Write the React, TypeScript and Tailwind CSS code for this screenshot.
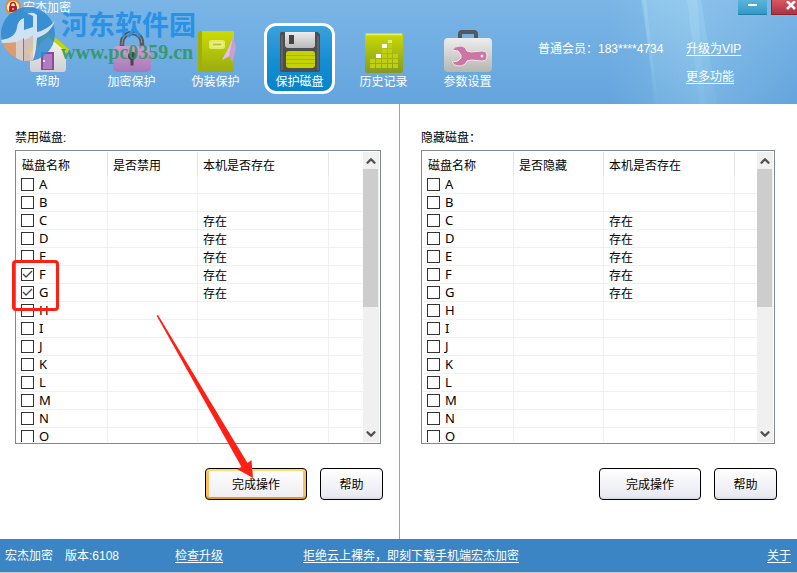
import React, { useRef, useState } from 'react';
import { ChevronDown, ChevronUp } from 'lucide-react';

const DRIVES = 'ABCDEFGHIJKLMNOPQRSTUVWXYZ'.split('');
const PRESENT = ['C', 'D', 'E', 'F', 'G'];

function HelpIcon() {
  return (
    <svg width="48" height="44" viewBox="0 0 48 44">
      <defs>
        <linearGradient id="wall" x1="0" y1="0" x2="0" y2="1">
          <stop offset="0" stopColor="#f8f8f8" />
          <stop offset="1" stopColor="#cfcfd2" />
        </linearGradient>
      </defs>
      <path d="M6 20 24 6l18 14v19q0 3-3 3H9q-3 0-3-3z" fill="url(#wall)" />
      <path d="M4 22 24 4l20 17" fill="none" stroke="#c3d600" strokeWidth="4" strokeLinejoin="round" strokeLinecap="round" />
      <path d="M17 22h13v18H17z" fill="#8c4a9e" />
      <path d="M19 24h9v15h-9z" fill="#b27cc0" />
      <circle cx="20" cy="31" r="1" fill="#fff" />
    </svg>
  );
}

function LockIcon() {
  return (
    <svg width="48" height="44" viewBox="0 0 48 44">
      <defs>
        <linearGradient id="lock" x1="0" y1="0" x2="0" y2="1">
          <stop offset="0" stopColor="#cb9fd2" />
          <stop offset="1" stopColor="#a878b8" />
        </linearGradient>
      </defs>
      <path d="M14 17v-4a10 10 0 0 1 20 0v4" fill="none" stroke="#55585e" strokeWidth="4.5" />
      <path d="M14 15v-2a10 10 0 0 1 20 0" fill="none" stroke="#94999f" strokeWidth="1" />
      <rect x="5" y="16" width="38" height="26" rx="5" fill="url(#lock)" />
      <circle cx="24" cy="26" r="4" fill="#4a4450" />
      <path d="M22.500 27h3v8.500h-3z" fill="#4a4450" />
    </svg>
  );
}

function DisguiseIcon() {
  return (
    <svg width="48" height="44" viewBox="0 0 48 44">
      <defs>
        <linearGradient id="book" x1="0" y1="0" x2="0" y2="1">
          <stop offset="0" stopColor="#cddb00" />
          <stop offset="1" stopColor="#9aac12" />
        </linearGradient>
      </defs>
      <rect x="6" y="1" width="36" height="41" rx="2" fill="url(#book)" />
      <path d="M6 3q0-2 2-2h2v41H8q-2 0-2-2z" fill="#9fb008" />
      <rect x="17" y="10" width="16" height="9" rx="2.500" fill="#e3ea6a" />
      <rect x="20" y="13" width="10" height="3" fill="#b5c52b" stroke="#f1f4a8" strokeWidth="1" />
      <path d="m41 7 3 9-1 7-3 9-2-5-8 3 7-13z" fill="#c7a0d0" />
      <path d="m41 7-4 19-7 4 7-13z" fill="#dcc3e2" />
    </svg>
  );
}

function DiskIcon() {
  return (
    <svg width="48" height="44" viewBox="0 0 48 44">
      <defs>
        <linearGradient id="metal" x1="0" y1="0" x2="0" y2="1">
          <stop offset="0" stopColor="#ececec" />
          <stop offset="1" stopColor="#b9b9b9" />
        </linearGradient>
      </defs>
      <path d="M4 3.500Q4 2 5.500 2h36L44 4.500V40q0 2-2 2H6q-2 0-2-2z" fill="#4e4d50" />
      <path d="M6 5v35M42 6v34" stroke="#78777a" strokeWidth="1" />
      <path d="M9 2h30v13q0 3-3 3H12q-3 0-3-3z" fill="url(#metal)" />
      <rect x="13" y="5" width="5" height="9" fill="#454446" />
      <rect x="10" y="21" width="29" height="17" rx="3" fill="#c4d300" />
      <path d="M10 25.500h29M10 29.500h29M10 33.500h29" stroke="#a5b508" strokeWidth="1" />
    </svg>
  );
}

function HistoryIcon() {
  return (
    <svg width="48" height="44" viewBox="0 0 48 44">
      <defs>
        <linearGradient id="hist" x1="0" y1="0" x2="0" y2="1">
          <stop offset="0" stopColor="#ccdb00" />
          <stop offset="1" stopColor="#849a22" />
        </linearGradient>
      </defs>
      <rect x="5" y="3" width="38" height="40" rx="2" fill="url(#hist)" />
      <path d="M6 4.500h36" stroke="#e8f060" strokeWidth="1.500" />
      <g fill="#c0d010">
        <path d="M10 34h5v4h-5zM16 34h5v4h-5zM22 34h5v4h-5zM28 34h4v4h-4zM33 34h5v4h-5z" />
        <path d="M10 29h5v4h-5zM16 29h5v4h-5zM22 29h5v4h-5zM28 29h4v4h-4zM33 29h5v4h-5z" />
        <path d="M22 24h5v4h-5zM28 24h4v4h-4zM33 24h5v4h-5zM22 19h5v4h-5zM28 19h4v4h-4zM28 14h4v4h-4z" />
      </g>
      <path d="M28 10h4v3h-4z" fill="#e2ea85" />
      <path d="M16 24h5v4h-5zM22 14h5v4h-5z" fill="#fff" />
    </svg>
  );
}

function SettingsIcon() {
  return (
    <svg width="48" height="44" viewBox="0 0 48 44">
      <defs>
        <linearGradient id="box" x1="0" y1="0" x2="0" y2="1">
          <stop offset="0" stopColor="#ededed" />
          <stop offset="1" stopColor="#b5b6b0" />
        </linearGradient>
      </defs>
      <path d="M16 9V4q0-2 2-2h12q2 0 2 2v5" fill="none" stroke="#56585c" strokeWidth="4" />
      <rect x="0" y="8" width="48" height="34" rx="4" fill="url(#box)" />
      <path
        d="M8 20q3-4 8-4 5 0 7 5l4 1 11-1q5 0 5 5t-5 5l-11-1-4 1q-2 5-8 5-5 0-7-4l6-1 3-3v-3l-3-4z"
        fill="#cb76a5"
        stroke="#f1e4ec"
        strokeWidth="1"
      />
      <circle cx="38" cy="26" r="1.500" fill="#f3dfe9" />
    </svg>
  );
}

const NAV = [
  { label: '帮助', icon: HelpIcon },
  { label: '加密保护', icon: LockIcon },
  { label: '伪装保护', icon: DisguiseIcon },
  { label: '保护磁盘', icon: DiskIcon, active: true },
  { label: '历史记录', icon: HistoryIcon },
  { label: '参数设置', icon: SettingsIcon },
];

function Watermark() {
  return (
    <div className="pointer-events-none absolute left-0 top-1 flex items-start gap-1">
      <svg width="57" height="60" viewBox="0 0 57 60" opacity="0.85">
        <circle cx="28" cy="30" r="27" fill="#2f8ad0" />
        <path d="M2 37q9-2 15-6l-1 23Q5 49 2 37z" fill="#ef9a5c" />
        <path d="M16 54V31l7-3v29q-4-1-7-3z" fill="#e9d3c8" />
        <path d="M1 36q15-2 16-13 1-7 7-9v12l9-3V12q-3-2-6-2 6-3 10 1v17q10-2 18-11-5 13-18 17-1 15-4 22l-9 1V34l-7 4Q10 39 2 39z" fill="#e0ebf6" />
        <path d="M24 36q6-2 9-5v25q-4 2-9 1z" fill="#e3b9a4" opacity="0.8" />
      </svg>
      <div className="pt-1">
        <p className="font-['Noto_Sans_CJK_SC',sans-serif] text-[27px] font-bold leading-8 text-[#2992e4]">河东软件园</p>
        <p className="font-['Liberation_Serif',serif] text-xl font-bold leading-6 text-[#2f9663]/90">www.pc0359.cn</p>
      </div>
    </div>
  );
}

function Header() {
  return (
    <header className="relative overflow-hidden bg-linear-to-b from-[#7ab5e6] to-[#64a4dd] text-white">
      <svg className="absolute right-0 top-0" width="190" height="104" viewBox="0 0 190 104">
        <defs>
          <linearGradient id="ray" x1="0" y1="0" x2="0" y2="1">
            <stop offset="0" stopColor="#b5e4f5" stopOpacity="0.28" />
            <stop offset="1" stopColor="#b5e4f5" stopOpacity="0.06" />
          </linearGradient>
          <linearGradient id="glow" x1="0" y1="0" x2="1" y2="0">
            <stop offset="0" stopColor="#b5e4f5" stopOpacity="0" />
            <stop offset="0.5" stopColor="#b5e4f5" stopOpacity="0.25" />
            <stop offset="1" stopColor="#b5e4f5" stopOpacity="0" />
          </linearGradient>
        </defs>
        <path d="M0 0h190v104H0z" fill="url(#glow)" />
        <path d="M34 0h60l16 104H50z" fill="url(#ray)" />
        <path d="M36 0h3l12 104h-4zM80 0h10l8 104h-5z" fill="url(#ray)" />
      </svg>
      <div className="relative flex h-[15px] items-start justify-between">
        <div className="flex items-center gap-0.5 pl-[5px]">
          <svg width="16" height="16" viewBox="0 0 16 16">
            <circle cx="8" cy="7" r="7" fill="#fff5dc" stroke="#e58a35" strokeWidth="2" />
            <path d="M5.500 7V5a2.500 2.500 0 0 1 5 0v2" fill="none" stroke="#b5231c" strokeWidth="1.500" />
            <rect x="4" y="6" width="8" height="6" rx="1" fill="#b5231c" />
            <path d="M7.500 8h1v2h-1z" fill="#fff" />
          </svg>
          <h1 className="leading-4">宏杰加密</h1>
        </div>
        <div className="flex gap-1">
          <button
            aria-label="最小化"
            className="flex h-[15px] w-[29px] items-center justify-center border-b border-[#237ca6] bg-linear-to-b from-[#58b5d9] to-[#3398c5]"
          >
            <span className="mb-1 h-0.5 w-[9px] bg-white" />
          </button>
          <button
            aria-label="关闭"
            className="-mr-3 flex h-[15px] w-[38px] items-center justify-center border-b border-l border-[#8f2430] bg-linear-to-b from-[#d95762] to-[#a93443]"
          >
            <svg width="10" height="9" viewBox="0 0 10 9" className="mb-1">
              <path d="m1 0 8 8M9 0 1 8" stroke="#fff" strokeWidth="2.500" />
            </svg>
          </button>
        </div>
      </div>
      <div className="relative flex pb-[10px] pt-2">
        <nav className="flex gap-[13px] pl-3">
          {NAV.map(({ label, icon: Icon, active }) => (
            <button
              key={label}
              className={
                active
                  ? 'flex h-[71px] w-[71px] flex-col items-center rounded-xl bg-linear-to-b from-[#3ba3dc] via-[#168fd2] to-[#0583cb] pt-[7px] ring-3 ring-white ring-inset'
                  : 'flex h-[71px] w-[71px] flex-col items-center pt-[7px]'
              }
            >
              <Icon />
              <span className="leading-4">{label}</span>
            </button>
          ))}
        </nav>
        <div className="ml-[35px] grid grid-cols-[148px_auto] content-start pt-3 leading-7">
          <span>普通会员：183****4734</span>
          <a href="#vip" className="underline underline-offset-2">升级为VIP</a>
          <a href="#more" className="col-start-2 underline underline-offset-2">更多功能</a>
        </div>
      </div>
      <Watermark />
    </header>
  );
}

interface DriveTableProps {
  name: string;
  columns: string[];
  initial: string[];
}

function DriveTable({ name, columns, initial }: DriveTableProps) {
  const view = useRef<HTMLDivElement>(null);
  const [checked, setChecked] = useState(initial);
  const [offset, setOffset] = useState(0);

  const toggle = (d: string) =>
    setChecked((prev) => (prev.includes(d) ? prev.filter((x) => x !== d) : [...prev, d]));

  const onScroll = (e: React.UIEvent<HTMLDivElement>) => {
    const el = e.currentTarget;
    setOffset(el.scrollTop / (el.scrollHeight - el.clientHeight));
  };

  return (
    <div className="mr-0.5 flex h-[294px] border border-[#828790] bg-white p-px">
      <div ref={view} onScroll={onScroll} className="min-w-0 flex-1 overflow-y-auto [scrollbar-width:none]">
        <table className="w-full table-fixed border-separate border-spacing-0">
          <thead className="sticky top-0 z-10 bg-white">
            <tr className="h-6 text-left">
              <th className="w-[91px] border-r border-[#e5e5e5] pl-[5px] pt-1 font-normal leading-5">{columns[0]}</th>
              <th className="w-[90px] border-r border-[#e5e5e5] pl-[5px] pt-1 font-normal leading-5">{columns[1]}</th>
              <th className="w-[131px] border-r border-[#e5e5e5] pl-[5px] pt-1 font-normal leading-5">{columns[2]}</th>
              <th />
            </tr>
          </thead>
          <tbody>
            {DRIVES.map((d) => (
              <tr key={d} className="h-[18px] leading-[17px] *:border-b *:border-[#f0f0f0] *:p-0">
                <td className="border-r">
                  <label className="flex items-center gap-[5px] pl-1">
                    <span className="relative flex">
                      <input
                        type="checkbox"
                        name={name}
                        checked={checked.includes(d)}
                        onChange={() => toggle(d)}
                        className="size-[13px] appearance-none border border-[#333] bg-white"
                      />
                      {checked.includes(d) && (
                        <svg className="pointer-events-none absolute inset-0" width="13" height="13" viewBox="0 0 13 13">
                          <path d="m2 6 3 3 6-6" fill="none" stroke="#444" strokeWidth="1.300" />
                        </svg>
                      )}
                    </span>
                    <span className="font-['Noto_Sans',sans-serif] text-[13px]">{d}</span>
                  </label>
                </td>
                <td className="border-r" />
                <td className="border-r">
                  <span className="block h-[17px] pl-[5px] leading-5">{PRESENT.includes(d) ? '存在' : ''}</span>
                </td>
                <td />
              </tr>
            ))}
          </tbody>
        </table>
      </div>
      <div className="flex w-4 flex-col bg-[#f0f0f0]">
        <button
          aria-label="向上滚动"
          className="flex h-[17px] items-center justify-center text-[#505050]"
          onClick={() => view.current?.scrollBy({ top: -18 })}
        >
          <ChevronUp size={14} strokeWidth={4} />
        </button>
        <div className="relative flex-1">
          <div className="absolute left-0 h-[54%] w-[15px] bg-[#cdcdcd]" style={{ top: `${offset * 46}%` }} />
        </div>
        <button
          aria-label="向下滚动"
          className="flex h-[17px] items-center justify-center text-[#505050]"
          onClick={() => view.current?.scrollBy({ top: 18 })}
        >
          <ChevronDown size={14} strokeWidth={4} />
        </button>
      </div>
    </div>
  );
}

function Actions({ focused = false }: { focused?: boolean }) {
  return (
    <div className="mt-6 flex justify-end gap-[13px]">
      <button
        className={
          focused
            ? 'h-8 w-[102px] rounded border border-black bg-linear-to-b from-white to-[#ededf2] pt-0.5 shadow-[inset_0_2px_#ffd87b,inset_0_-2px_#e59b08,inset_3px_0_#f8c25b,inset_-3px_0_#f8c25b]'
            : 'h-8 w-[102px] rounded border border-black bg-linear-to-b from-white to-[#e7e7f0] pt-0.5 shadow-[inset_0_-2px_#dcdcea]'
        }
      >
        完成操作
      </button>
      <button className="h-8 w-[63px] rounded border border-black bg-linear-to-b from-white to-[#e7e7f0] pt-0.5 shadow-[inset_0_-2px_#dcdcea]">
        帮助
      </button>
    </div>
  );
}

export default function App() {
  return (
    <div className="flex min-h-screen flex-col bg-white font-['Liberation_Sans','Noto_Sans_CJK_SC',sans-serif] text-xs text-black">
      <Header />
      <main className="grid flex-1 grid-cols-[400fr_397fr]">
        <section className="relative border-r border-[#a0a0a0] pl-[15px] pr-4 pt-6">
          <h2 className="mb-0.5 leading-5">禁用磁盘:</h2>
          <DriveTable name="disable" columns={['磁盘名称', '是否禁用', '本机是否存在']} initial={['F', 'G']} />
          <Actions focused />
          <div className="pointer-events-none absolute left-3 top-[156px] h-[51px] w-[47px] rounded border-3 border-[#ff2015]" />
          <svg className="pointer-events-none absolute left-[156px] top-[210px]" width="100" height="168" viewBox="0 0 100 168">
            <path d="M.5 1.500 2 1l89.500 148 4-3L97 164l-16-9 4.500-2z" fill="#ff2015" />
          </svg>
        </section>
        <section className="pl-[21px] pr-5 pt-6">
          <h2 className="mb-0.5 leading-5">隐藏磁盘：</h2>
          <DriveTable name="hide" columns={['磁盘名称', '是否隐藏', '本机是否存在']} initial={[]} />
          <Actions />
        </section>
      </main>
      <footer className="flex h-[34px] items-center border-b border-[#c8c8c8] bg-[#3b85c4] pl-[5px] pr-1.5 text-white">
        <span className="w-[60px]">宏杰加密</span>
        <span className="w-[110px]">版本:6108</span>
        <a href="#update" className="w-32 underline underline-offset-2">检查升级</a>
        <a href="#mobile" className="underline underline-offset-2">拒绝云上裸奔，即刻下载手机端宏杰加密</a>
        <a href="#about" className="ml-auto underline underline-offset-2">关于</a>
      </footer>
    </div>
  );
}
